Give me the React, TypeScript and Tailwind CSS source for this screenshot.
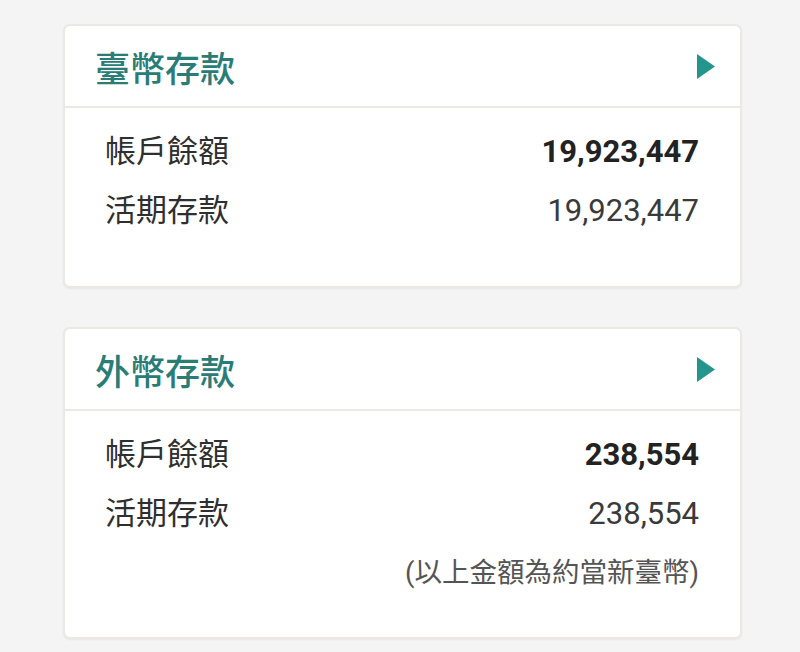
const font = { fontFamily: 'Roboto, "Noto Sans CJK TC", sans-serif' }

type Row = { label: string; value: string; bold?: boolean }

function Triangle() {
  return (
    <svg width="18" height="25" viewBox="0 0 18 25">
      <polygon points="0,0 18,12.5 0,25" fill="#23958d" />
    </svg>
  )
}

function Card({ title, rows, note, pb }: { title: string; rows: Row[]; note?: string; pb: string }) {
  return (
    <div className="w-[679px] ml-[63px] bg-white rounded-[7px] border-2 border-[#ece8e4] shadow-[0_1px_2px_rgba(0,0,0,0.06)]">
      <div className="h-[82px] flex items-center justify-between pl-[30px] pr-[25px] border-b-2 border-[#ece8e4]">
        <span className="text-[35px] leading-none font-medium text-[#2a7c76] pt-[8px]">{title}</span>
        <Triangle />
      </div>
      <div className={`pt-[14px] pl-[40px] pr-[41px] ${pb}`}>
        {rows.map(r => (
          <div key={r.label} className="h-[59px] flex items-center justify-between text-[#2f2f2f]">
            <span className="text-[31px] leading-none">{r.label}</span>
            <span className={`text-[31px] leading-none ${r.bold ? 'font-bold text-[#222]' : 'text-[#3a3a3a]'}`}>{r.value}</span>
          </div>
        ))}
        {note && (
          <div className="h-[59px] flex items-center justify-end text-[27.5px] leading-none text-[#555]">{note}</div>
        )}
      </div>
    </div>
  )
}

export default function App() {
  return (
    <div className="w-[800px] h-[652px] bg-[#f4f4f4] pt-[24px] flex flex-col gap-[39px] overflow-hidden" style={font}>
      <Card
        title="臺幣存款"
        pb="pb-[46px]"
        rows={[
          { label: '帳戶餘額', value: '19,923,447', bold: true },
          { label: '活期存款', value: '19,923,447' },
        ]}
      />
      <Card
        title="外幣存款"
        pb="pb-[35px]"
        rows={[
          { label: '帳戶餘額', value: '238,554', bold: true },
          { label: '活期存款', value: '238,554' },
        ]}
        note="(以上金額為約當新臺幣)"
      />
    </div>
  )
}
